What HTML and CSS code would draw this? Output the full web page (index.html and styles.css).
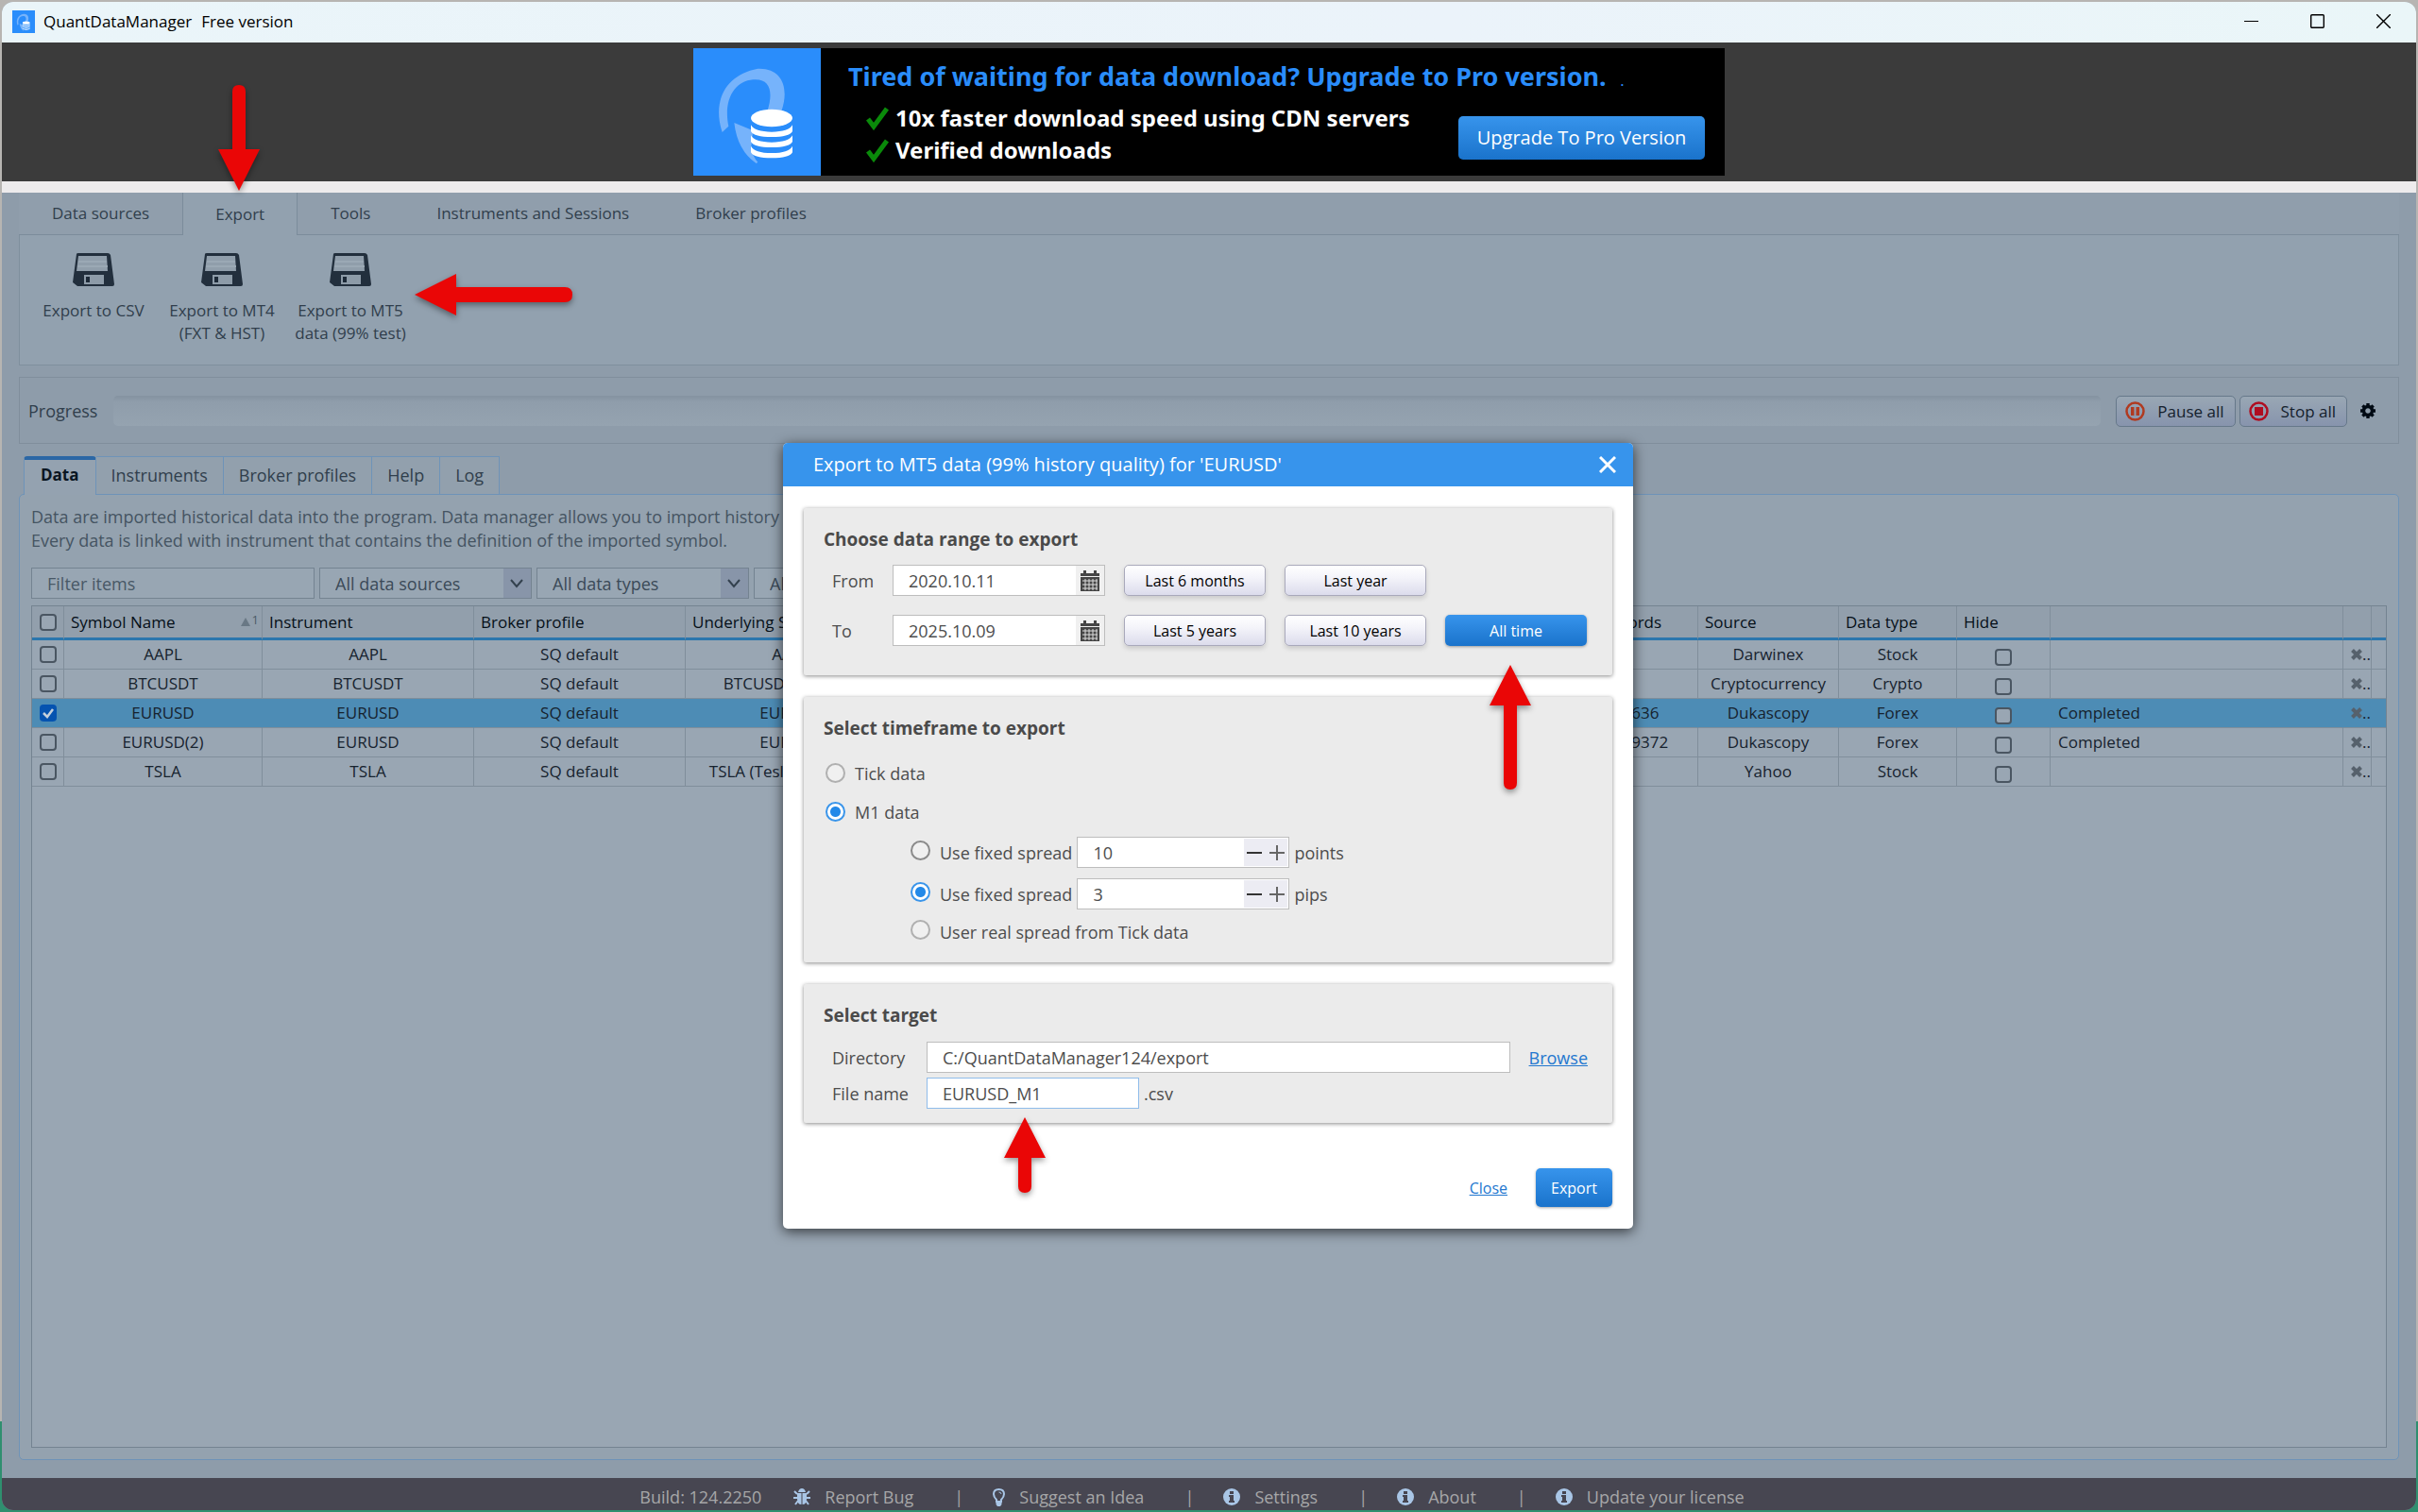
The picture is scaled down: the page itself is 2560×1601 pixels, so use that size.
FILE: index.html
```html
<!DOCTYPE html>
<html lang="en">
<head>
<meta charset="utf-8">
<title>QuantDataManager Free version</title>
<link rel="stylesheet" href="styles.css">
</head>
<body>
<svg class="sprite" aria-hidden="true">
  <symbol id="logo" viewBox="0 0 405 405">
    <rect width="405" height="405" fill="#2a8dfb"/>
    <path d="M92 267C60 170 100 85 205 65C285 62 305 130 280 200L235 200C255 140 245 95 190 100C130 105 95 165 112 248Z" fill="#76b3fb"/>
    <path d="M130 237L190 262L183 320Q190 345 205 362L200 366Q140 325 130 237Z" fill="#76b3fb"/>
    <g fill="#fff">
      <ellipse cx="249" cy="222" rx="66" ry="28"/>
      <path d="M183 244Q195 266 249 266T315 244V264Q305 282 249 282T183 264Z"/>
      <path d="M183 277Q195 299 249 299T315 277V297Q305 315 249 315T183 297Z"/>
      <path d="M183 311Q195 333 249 333T315 311V331Q305 349 249 349T183 331Z"/>
    </g>
  </symbol>
  <symbol id="floppy" viewBox="0 0 44 36">
    <path d="M4 1Q4 0 6 0H37Q39 0 40 2L44 33Q44 35 42 35H5L0 31Z" fill="#222f3d"/>
    <path d="M6 3H36L37 19H4Z" fill="#909eab"/>
    <path d="M6 9H36M5 14H37" stroke="#9ba9b5" stroke-width="2"/>
    <path d="M12 23H33V33H12Z" fill="#8d9ba8"/>
    <path d="M14 25H18V31H14Z" fill="#1d2a38"/>
  </symbol>
  <symbol id="info" viewBox="0 0 18 18">
    <circle cx="9" cy="9" r="9" fill="#a9c6e6"/>
    <path d="M7 3H11V6H7ZM6 7H11V13H12V15H6V13H7V9H6Z" fill="#474651"/>
  </symbol>
  <symbol id="cal" viewBox="0 0 20 22">
    <path d="M0 3H3V0H6V3H14V0H17V3H20V6H0ZM0 7H20V22H0Z" fill="#464646"/>
    <path d="M2 11H18M2 15H18M2 19H18M5 9V21M9 9V21M13 9V21M17 9V21" stroke="#ddd" stroke-width="1"/>
  </symbol>
  <symbol id="cross" viewBox="0 0 12 12">
    <path d="M1.500 1.500L10.500 10.500M10.500 1.500L1.500 10.500" stroke="#56616c" stroke-width="4"/>
  </symbol>
</svg>
<div class="window">
  <header class="titlebar">
    <svg class="app-icon"><use href="#logo"/></svg>
    <span class="app-name">QuantDataManager</span><span>Free version</span>
    <div class="win-controls">
      <button aria-label="Minimize"><svg width="15" height="15"><path d="M0 7.500H15" stroke="#000" fill="none"/></svg></button>
      <button aria-label="Maximize"><svg width="15" height="15"><rect x=".7" y=".7" width="13.600" height="13.600" rx="1" stroke="#000" stroke-width="1.400" fill="none"/></svg></button>
      <button aria-label="Close window"><svg width="15" height="15"><path d="M0 0L15 15M15 0L0 15" stroke="#000" stroke-width="1.400" fill="none"/></svg></button>
    </div>
  </header>

  <section class="banner">
    <div class="ad">
      <svg class="ad-logo"><use href="#logo"/></svg>
      <div class="ad-text">
        <p class="ad-title">Tired of waiting for data download? Upgrade to Pro version. <small>.</small></p>
        <ul>
          <li><svg width="25" height="25" viewBox="0 0 25 25"><path d="M2 13L8 21L22 2" stroke="#0a8a0a" stroke-width="5" fill="none"/></svg>10x faster download speed using CDN servers</li>
          <li><svg width="25" height="25" viewBox="0 0 25 25"><path d="M2 13L8 21L22 2" stroke="#0a8a0a" stroke-width="5" fill="none"/></svg>Verified downloads</li>
        </ul>
      </div>
      <button class="primary upgrade">Upgrade To Pro Version</button>
    </div>
  </section>

  <main class="app">
    <nav class="ribbon-tabs">
      <button>Data sources</button><button class="active">Export</button><button>Tools</button><button>Instruments and Sessions</button><button>Broker profiles</button>
    </nav>
    <section class="ribbon">
      <button><svg><use href="#floppy"/></svg>Export to CSV</button>
      <button><svg><use href="#floppy"/></svg>Export to MT4<br>(FXT &amp; HST)</button>
      <button><svg><use href="#floppy"/></svg>Export to MT5<br>data (99% test)</button>
    </section>

    <section class="progress">
      <span id="progress-label">Progress</span>
      <div class="bar" role="progressbar" aria-labelledby="progress-label" aria-valuenow="0"></div>
      <div class="actions">
        <button class="action"><svg viewBox="0 0 21 21"><circle cx="10.500" cy="10.500" r="9" stroke="#b03a20" stroke-width="2.500" fill="none"/><path d="M6 6H9.500V15H6ZM11.500 6H15V15H11.500Z" fill="#b03a20"/></svg>Pause all</button>
        <button class="action"><svg viewBox="0 0 21 21"><circle cx="10.500" cy="10.500" r="9" stroke="#b00d20" stroke-width="2.500" fill="none"/><path d="M6 6H15V15H6Z" fill="#b00d20"/></svg>Stop all</button>
      </div>
      <button class="gear" aria-label="Settings"><svg width="16" height="16" viewBox="-8 -8 16 16"><circle r="4.500" fill="none" stroke="#000a14" stroke-width="3.400"/><path d="M0 -8V-5M0 8V5M-8 0H-5M8 0H5M-5.600 -5.600L-3.800 -3.800M5.600 5.600L3.800 3.800M-5.600 5.600L-3.800 3.800M5.600 -5.600L3.800 -3.800" stroke="#000a14" stroke-width="3.400"/></svg></button>
    </section>

    <nav class="tabs">
      <button class="active">Data</button><button>Instruments</button><button>Broker profiles</button><button>Help</button><button>Log</button>
    </nav>
    <section class="panel">
      <p class="intro">Data are imported historical data into the program. Data manager allows you to import history<br>Every data is linked with instrument that contains the definition of the imported symbol.</p>
      <div class="filters">
        <input type="text" placeholder="Filter items" aria-label="Filter items">
        <span class="select"><select aria-label="Data source"><option>All data sources</option></select><svg viewBox="0 0 14 10"><path d="M1 1L7 8L13 1"/></svg></span>
        <span class="select"><select aria-label="Data type"><option>All data types</option></select><svg viewBox="0 0 14 10"><path d="M1 1L7 8L13 1"/></svg></span>
        <span class="select"><select aria-label="Instrument"><option>All instruments</option></select><svg viewBox="0 0 14 10"><path d="M1 1L7 8L13 1"/></svg></span>
      </div>
      <div class="grid">
        <table>
          <colgroup><col class="w-check"><col class="w-name"><col class="w-mid"><col class="w-mid"><col class="w-mid"><col class="w-date"><col class="w-date"><col class="w-total"><col class="w-source"><col class="w-type"><col class="w-hide"><col><col class="w-del"><col class="w-end"></colgroup>
          <thead>
            <tr><th><input type="checkbox" aria-label="Select all"></th><th><div class="sorted">Symbol Name<span class="sort"><i></i><sup>1</sup></span></div></th><th>Instrument</th><th>Broker profile</th><th>Underlying Symbol</th><th>From</th><th>To</th><th>Total records</th><th>Source</th><th>Data type</th><th>Hide</th><th></th><th></th><th></th></tr>
          </thead>
          <tbody>
            <tr><td><input type="checkbox" aria-label="Select AAPL"></td><td>AAPL</td><td>AAPL</td><td>SQ default</td><td>AAPL</td><td></td><td></td><td></td><td>Darwinex</td><td>Stock</td><td><input class="low" type="checkbox" aria-label="Hide AAPL"></td><td></td><td><button class="del" aria-label="Delete AAPL"><svg><use href="#cross"/></svg>..</button></td><td></td></tr>
            <tr><td><input type="checkbox" aria-label="Select BTCUSDT"></td><td>BTCUSDT</td><td>BTCUSDT</td><td>SQ default</td><td>BTCUSDT (Bitcoin)</td><td></td><td></td><td></td><td>Cryptocurrency</td><td>Crypto</td><td><input class="low" type="checkbox" aria-label="Hide BTCUSDT"></td><td></td><td><button class="del" aria-label="Delete BTCUSDT"><svg><use href="#cross"/></svg>..</button></td><td></td></tr>
            <tr class="selected"><td><input type="checkbox" checked aria-label="Select EURUSD"></td><td>EURUSD</td><td>EURUSD</td><td>SQ default</td><td>EURUSD</td><td></td><td></td><td>8023636</td><td>Dukascopy</td><td>Forex</td><td><input class="low" type="checkbox" aria-label="Hide EURUSD"></td><td class="left">Completed</td><td><button class="del" aria-label="Delete EURUSD"><svg><use href="#cross"/></svg>..</button></td><td></td></tr>
            <tr><td><input type="checkbox" aria-label="Select EURUSD(2)"></td><td>EURUSD(2)</td><td>EURUSD</td><td>SQ default</td><td>EURUSD</td><td></td><td></td><td>480259372</td><td>Dukascopy</td><td>Forex</td><td><input class="low" type="checkbox" aria-label="Hide EURUSD(2)"></td><td class="left">Completed</td><td><button class="del" aria-label="Delete EURUSD(2)"><svg><use href="#cross"/></svg>..</button></td><td></td></tr>
            <tr><td><input type="checkbox" aria-label="Select TSLA"></td><td>TSLA</td><td>TSLA</td><td>SQ default</td><td>TSLA (Tesla Company)</td><td></td><td></td><td></td><td>Yahoo</td><td>Stock</td><td><input class="low" type="checkbox" aria-label="Hide TSLA"></td><td></td><td><button class="del" aria-label="Delete TSLA"><svg><use href="#cross"/></svg>..</button></td><td></td></tr>
          </tbody>
        </table>
      </div>
    </section>

    <div class="overlay">
      <form class="dialog" role="dialog" aria-labelledby="dialog-title">
        <header class="dialog-head">
          <h1 id="dialog-title">Export to MT5 data (99% history quality) for 'EURUSD'</h1>
          <button type="button" aria-label="Close dialog"><svg width="18" height="18"><path d="M1 1L17 17M17 1L1 17" stroke="#fff" stroke-width="3"/></svg></button>
        </header>
        <div class="dialog-body">
          <section class="card range">
            <h2>Choose data range to export</h2>
            <div class="range-row">
              <label for="from">From</label>
              <span class="field"><input id="from" type="text" value="2020.10.11"><span class="cal"><svg width="20" height="22"><use href="#cal"/></svg></span></span>
              <button type="button" class="plain">Last 6 months</button><button type="button" class="plain">Last year</button>
            </div>
            <div class="range-row">
              <label for="to">To</label>
              <span class="field"><input id="to" type="text" value="2025.10.09"><span class="cal"><svg width="20" height="22"><use href="#cal"/></svg></span></span>
              <button type="button" class="plain">Last 5 years</button><button type="button" class="plain">Last 10 years</button><button type="button" class="primary">All time</button>
            </div>
          </section>
          <section class="card timeframe">
            <h2>Select timeframe to export</h2>
            <div class="option"><input type="radio" name="tf" id="tick"><label for="tick">Tick data</label></div>
            <div class="option"><input type="radio" name="tf" id="m1" checked><label for="m1">M1 data</label></div>
            <div class="sub">
              <div class="spread"><input type="radio" class="dark" name="spread" id="points"><label for="points">Use fixed spread</label><span class="field"><input type="text" value="10" aria-label="Spread in points"><span class="steps"><button type="button" aria-label="Less"><svg width="16" height="16"><path d="M0 8H16" stroke="#333" stroke-width="2"/></svg></button><button type="button" aria-label="More"><svg width="16" height="16"><path d="M0 8H16M8 0V16" stroke="#666" stroke-width="2"/></svg></button></span></span><span>points</span></div>
              <div class="spread"><input type="radio" name="spread" id="pips" checked><label for="pips">Use fixed spread</label><span class="field"><input type="text" value="3" aria-label="Spread in pips"><span class="steps"><button type="button" aria-label="Less"><svg width="16" height="16"><path d="M0 8H16" stroke="#333" stroke-width="2"/></svg></button><button type="button" aria-label="More"><svg width="16" height="16"><path d="M0 8H16M8 0V16" stroke="#666" stroke-width="2"/></svg></button></span></span><span>pips</span></div>
              <div class="spread short"><input type="radio" name="spread" id="real"><label for="real">User real spread from Tick data</label></div>
            </div>
          </section>
          <section class="card target">
            <h2>Select target</h2>
            <div class="target-row"><label for="dir">Directory</label><span class="field grow"><input id="dir" type="text" value="C:/QuantDataManager124/export"></span><a href="#">Browse</a></div>
            <div class="target-row"><label for="file">File name</label><span class="field focus"><input id="file" type="text" value="EURUSD_M1"></span><span>.csv</span></div>
          </section>
          <footer class="dialog-foot"><a href="#">Close</a><button type="button" class="primary">Export</button></footer>
        </div>
        <svg class="arrow arrow-time" width="44" height="134"><path d="M22 1L44 44H29V126Q29 133 22 133T15 126V44H0Z"/></svg>
        <svg class="arrow arrow-file" width="44" height="82"><path d="M22 1L44 44H29V74Q29 81 22 81T15 74V44H0Z"/></svg>
      </form>
    </div>
  </main>

  <footer class="status">
    <span>Build: 124.2250</span>
    <a href="#" class="bug"><svg viewBox="0 0 18 18"><path d="M5 4Q6 0 9 0T13 4ZM4 5H8.500V17Q4 17 4 11ZM9.500 5H14V11Q14 17 9.500 17Z" fill="#a9c6e6"/><path d="M1 3L4 6M17 3L14 6M0 10H4M18 10H14M2 17L5 13M16 17L13 13" stroke="#a9c6e6" stroke-width="2"/></svg>Report Bug</a>
    <i class="sep">|</i>
    <a href="#"><svg class="narrow" viewBox="0 0 13 19"><path d="M4 12Q1 9 1 6Q1 1 6.500 1T12 6Q12 9 9 12V14H4Z" fill="none" stroke="#a9c6e6" stroke-width="2"/><path d="M3.500 13H9.500V17L8 19H5L3.500 17Z" fill="#a9c6e6"/><path d="M6.500 4Q9 4 9 6" fill="none" stroke="#a9c6e6"/></svg>Suggest an Idea</a>
    <i class="sep">|</i>
    <a href="#"><svg><use href="#info"/></svg>Settings</a>
    <i class="sep">|</i>
    <a href="#"><svg><use href="#info"/></svg>About</a>
    <i class="sep">|</i>
    <a href="#"><svg><use href="#info"/></svg>Update your license</a>
  </footer>
  <svg class="arrow arrow-export" width="44" height="114"><path d="M22 113L44 69H29V8Q29 1 22 1T15 8V69H0Z"/></svg>
  <svg class="arrow arrow-mt5" width="168" height="46"><path d="M1 23L45 1V15H160Q168 15 168 23T160 31H45V45Z"/></svg>
</div>
</body>
</html>
```
FILE: styles.css
```css
* { box-sizing: border-box; }
body {
  margin: 0;
  min-height: 100vh;
  display: flex;
  padding: 2px;
  background: linear-gradient(#b7b5b2 0 94%, #2f8f6f 94%);
  font: 17px/24px "Open Sans", "Noto Sans", sans-serif;
  color: #303e4c;
}
button, input, select { font: inherit; color: inherit; margin: 0; }
button { background: none; border: 0; padding: 0; white-space: nowrap; }
h1, h2, p, ul { margin: 0; padding: 0; font: inherit; }
svg { display: block; flex: none; }
.sprite { position: absolute; width: 0; height: 0; }

.window {
  position: relative;
  flex: 1;
  min-width: 0;
  display: flex;
  flex-direction: column;
  border-radius: 12px;
  overflow: hidden;
  background: #8e9caa;
}

/* Title bar */
.titlebar {
  display: flex;
  align-items: center;
  height: 43px;
  padding: 0 27px 2px 11px;
  background: linear-gradient(90deg, #eaf5f9, #ebf3fa 60%, #eaf6f8);
  color: #000;
}
.app-icon { width: 24px; height: 24px; margin-right: 9px; }
.app-name { margin-right: 10px; }
.win-controls { display: flex; gap: 55px; margin-left: auto; }

/* Upgrade banner */
.banner {
  display: flex;
  justify-content: center;
  padding: 6px 0;
  background: #3b3b3b;
  border-bottom: 12px solid #edebec;
}
.ad { display: flex; width: 1092px; height: 135px; background: #000; color: #fff; }
.ad-logo { width: 135px; height: 135px; }
.ad-text { flex: 1; min-width: 0; padding: 11px 0 0 29px; font: bold 24px/34px "Noto Sans", "Open Sans", sans-serif; white-space: nowrap; }
.ad-title { font-size: 27px; line-height: 38px; color: #2a8dfb; }
.ad-title small { font-size: 12px; margin-left: 8px; }
.ad ul { list-style: none; padding: 2px 0 0 19px; }
.ad li { display: flex; align-items: center; gap: 6px; }
.primary {
  color: #fff;
  background: linear-gradient(#3794ec, #1a73cb);
  border-radius: 5px;
  box-shadow: 0 1px 3px #0005;
}
.upgrade { align-self: flex-end; width: 261px; height: 46px; margin: 0 21px 17px 0; font-size: 20px; }

/* Ribbon */
.app { position: relative; flex: 1; display: flex; flex-direction: column; padding: 0 18px 19px; }
.ribbon-tabs { display: flex; height: 45px; background: #909eac; }
.ribbon-tabs button { padding: 0 35px; border-bottom: 1px solid #7b8c9b; }
.ribbon-tabs::after { content: ""; flex: 1; border-bottom: 1px solid #7b8c9b; }
.ribbon-tabs .active { background: #92a1af; border: 1px solid #7b8c9b; border-width: 0 1px; padding: 0 34px; }
.ribbon {
  display: flex;
  height: 138px;
  padding: 19px 0 0 10px;
  background: #92a1af;
  border: 1px solid #7f8f9d;
  border-top: 0;
}
.ribbon button { display: flex; flex-direction: column; align-items: center; width: 136px; }
.ribbon svg { width: 44px; height: 36px; margin-bottom: 13px; }

/* Progress */
.progress {
  display: flex;
  align-items: center;
  height: 71px;
  margin-top: 12px;
  padding: 0 24px 0 9px;
  border: 1px solid #808e9c;
}
#progress-label { font-size: 18px; }
.bar { flex: 1; height: 32px; margin: 0 16px 0 17px; border-radius: 5px; background: linear-gradient(#8492a0, #8f9dab 20%, #95a3b0); }
.actions { display: flex; gap: 4px; padding-top: 2px; }
.action {
  display: flex;
  align-items: center;
  gap: 13px;
  height: 33px;
  padding: 0 11px 0 9px;
  border: 1px solid #66788a;
  border-radius: 5px;
  background: linear-gradient(#99a7b4, #8794ad);
  color: #14202c;
}
.action svg { width: 21px; height: 21px; }
.gear { margin-left: 14px; }

/* Tabs */
.tabs { display: flex; height: 41px; margin: 13px 0 0 5px; position: relative; z-index: 1; font-size: 18px; }
.tabs button { padding: 0 16px 2px; border: 1px solid #6e93b8; border-width: 1px 1px 1px 0; background: #92a0ad; }
.tabs .active {
  padding: 0 17px 5px;
  border-color: #6e93b8;
  border-width: 4px 1px 0;
  border-top-color: #2b67a5;
  border-radius: 4px 4px 0 0;
  background: #94a2b0;
  color: #0a1622;
  font-size: 17px;
  font-weight: bold;
}
.panel {
  flex: 1;
  display: flex;
  flex-direction: column;
  margin-top: -1px;
  padding: 11px 12px 12px;
  border: 1px solid #6e93b8;
  border-radius: 5px;
  background: #94a2af;
}
.intro { line-height: 25px; color: #455462; white-space: nowrap; font-size: 17px; }
.filters { display: flex; gap: 5px; margin: 16px 0 7px; color: #3b4a58; font-size: 18px; }
.intro { font-size: 18px; }
.filters input, .select { height: 33px; border: 1px solid #748391; background: #98a6b3; }
.filters input { width: 300px; padding: 0 16px; }
.filters input::placeholder { color: #485866; opacity: 1; }
.select { display: flex; align-items: center; width: 225px; position: relative; background: linear-gradient(90deg, #98a6b3 194px, #8895a9 194px); }
.select select { flex: 1; height: 31px; padding: 0 16px; border: 0; background: none; appearance: none; }
.select svg { position: absolute; right: 8px; width: 14px; height: 10px; fill: none; stroke: #33414e; stroke-width: 2; pointer-events: none; }

/* Data grid */
.grid { flex: 1; border: 1px solid #748391; background: #99a6b3; color: #16222e; }
table { width: 100%; table-layout: fixed; border-collapse: separate; border-spacing: 0; }
th, td { height: 31px; padding: 0; border: 0 solid #808e9b; border-width: 0 1px 1px 0; text-align: center; font-weight: normal; overflow: hidden; white-space: nowrap; }
th { height: 36px; padding: 0 7px; border-bottom: 3px solid #2b76ad; background: #929fac; text-align: left; color: #050f18; }
th:last-child, td:last-child { border-right: 0; }
th:first-child { text-align: center; padding: 0; }
td.left { text-align: left; padding-left: 8px; }
.w-check { width: 34px; } .w-name { width: 210px; } .w-mid { width: 224px; } .w-date { width: 349px; }
.w-total { width: 150px; } .w-source { width: 149px; } .w-type { width: 125px; } .w-hide { width: 99px; }
.w-del { width: 30px; } .w-end { width: 15px; }
.sorted, .sort { display: flex; align-items: center; justify-content: space-between; }
.sort { margin-right: -4px; color: #4c5b69; gap: 2px; }
.sort sup { font-size: 13px; line-height: 20px; padding-bottom: 6px; }
.sort i { border: 5px solid transparent; border-top: 0; border-bottom: 9px solid #697885; }
input[type="checkbox"] { display: block; margin: 0 auto; width: 18px; height: 18px; appearance: none; border: 2px solid #4a5662; border-radius: 4px; background: #99a6b3; }
input[type="checkbox"]:checked {
  border-color: #0553b0;
  background: #0553b0 url("data:image/svg+xml,%3Csvg xmlns='http://www.w3.org/2000/svg' viewBox='0 0 14 14'%3E%3Cpath d='M2 7L6 11L12 3' fill='none' stroke='%23c4d0dc' stroke-width='2.500'/%3E%3C/svg%3E");
}
input[type="checkbox"].low { margin-top: 5px; }
.selected td { background: #4d8cb5; border-right-color: #4d8cb5; }
.del { display: flex; align-items: center; margin-left: 8px; }
.del svg { width: 12px; height: 12px; }

/* Export dialog */
.overlay { position: absolute; inset: 0; z-index: 2; display: flex; justify-content: center; align-items: flex-start; padding-top: 265px; }
.dialog { position: relative; width: 900px; margin-right: 2px; border-radius: 5px; background: #fff; box-shadow: 0 3px 14px #000a; color: #4d4d4d; font-size: 18px; }
.dialog-head { display: flex; align-items: center; justify-content: space-between; height: 46px; padding: 0 18px 0 32px; border-radius: 5px 5px 0 0; background: #3794ec; color: #fff; }
.dialog-head h1 { font-size: 20px; }
.dialog-body { display: flex; flex-direction: column; gap: 23px; padding: 23px 22px; }
.card { padding: 20px 21px; background: #ebebeb; border-radius: 2px; box-shadow: 0 1px 4px #0007; }
.card h2 { font-size: 19px; line-height: 26px; font-weight: bold; color: #4a4a4a; }
.range { height: 177px; }
.range-row { display: flex; align-items: center; gap: 20px; margin-top: 14px; }
.range-row + .range-row { margin-top: 20px; }
.range-row label { width: 45px; padding-left: 9px; margin-right: 8px; }
.range-row button { width: 150px; height: 33px; }
.field { display: flex; width: 225px; height: 33px; border: 1px solid #bdbdbd; background: #fff; }
.field input { flex: 1; min-width: 0; height: 31px; padding: 0 16px; border: 0; background: none; outline: 0; }
.cal, .steps { display: flex; align-items: center; justify-content: center; width: 30px; background: #f0f0f0; }
.plain, .range-row .primary { font-size: 16px; }
.plain { color: #000; border: 1px solid #a9a9bb; border-radius: 5px; background: linear-gradient(#fff, #f4f4fa 40%, #dcdcec); box-shadow: 0 3px 5px #0002; }
.timeframe { height: 281px; }
input[type="radio"] { width: 21px; height: 21px; appearance: none; border: 2px solid #b0b0b0; border-radius: 50%; background: #f0f0f0; }
input[type="radio"].dark { border-color: #8b8b8b; }
input[type="radio"]:checked { border-color: #3a95ea; background: radial-gradient(#2389e8 5px, #fff 6px); }
.option { display: flex; align-items: center; gap: 10px; height: 41px; padding-left: 2px; }
.timeframe h2 { margin-bottom: 14px; }
.sub { display: flex; flex-direction: column; gap: 11px; padding: 6px 0 0 92px; }
.spread { display: flex; align-items: center; min-height: 33px; }
.spread.short { min-height: 26px; }
.spread input[type="radio"] { margin-bottom: 5px; }
.spread label { margin: 0 5px 0 10px; }
.spread > span:last-child { margin-left: 5px; }
.steps { width: 48px; gap: 8px; background: #ececf3; border: 1px solid #fff; }
.target { height: 147px; }
.target-row { display: flex; align-items: center; height: 33px; margin-top: 15px; gap: 5px; }
.target-row + .target-row { margin-top: 5px; }
.target-row label { width: 104px; padding-left: 9px; }
.target-row .grow { width: auto; flex: 1; margin-right: 15px; }
.target-row a { margin-right: 5px; }
.focus { border-color: #8fbcea; }
a { color: #2377cf; }
.dialog-foot { display: flex; align-items: center; justify-content: flex-end; gap: 30px; margin-top: 25px; font-size: 16px; }
.dialog-foot .primary { width: 81px; height: 41px; }

/* Footer */
.status { display: flex; align-items: center; justify-content: center; height: 34px; padding: 6px 36px 0 0; background: #474651; color: #a6a6a8; white-space: nowrap; font-size: 18px; }
.status a { display: flex; align-items: center; color: inherit; text-decoration: none; gap: 15px; }
.status .bug { margin-left: 34px; }
.status svg { width: 18px; height: 18px; }
.status svg.narrow { width: 13px; height: 19px; }
.sep { width: 4px; margin: 0 37px 0 43px; font-style: normal; }

/* Pointer arrows laid over the window */
.arrow { position: absolute; z-index: 3; fill: #ea0606; overflow: visible; filter: drop-shadow(0 3px 3px #0006); }
.arrow-export { left: 229px; top: 87px; }
.arrow-mt5 { left: 436px; top: 287px; }
.arrow-time { right: 108px; top: 234px; }
.arrow-file { left: 234px; top: 713px; }
```
